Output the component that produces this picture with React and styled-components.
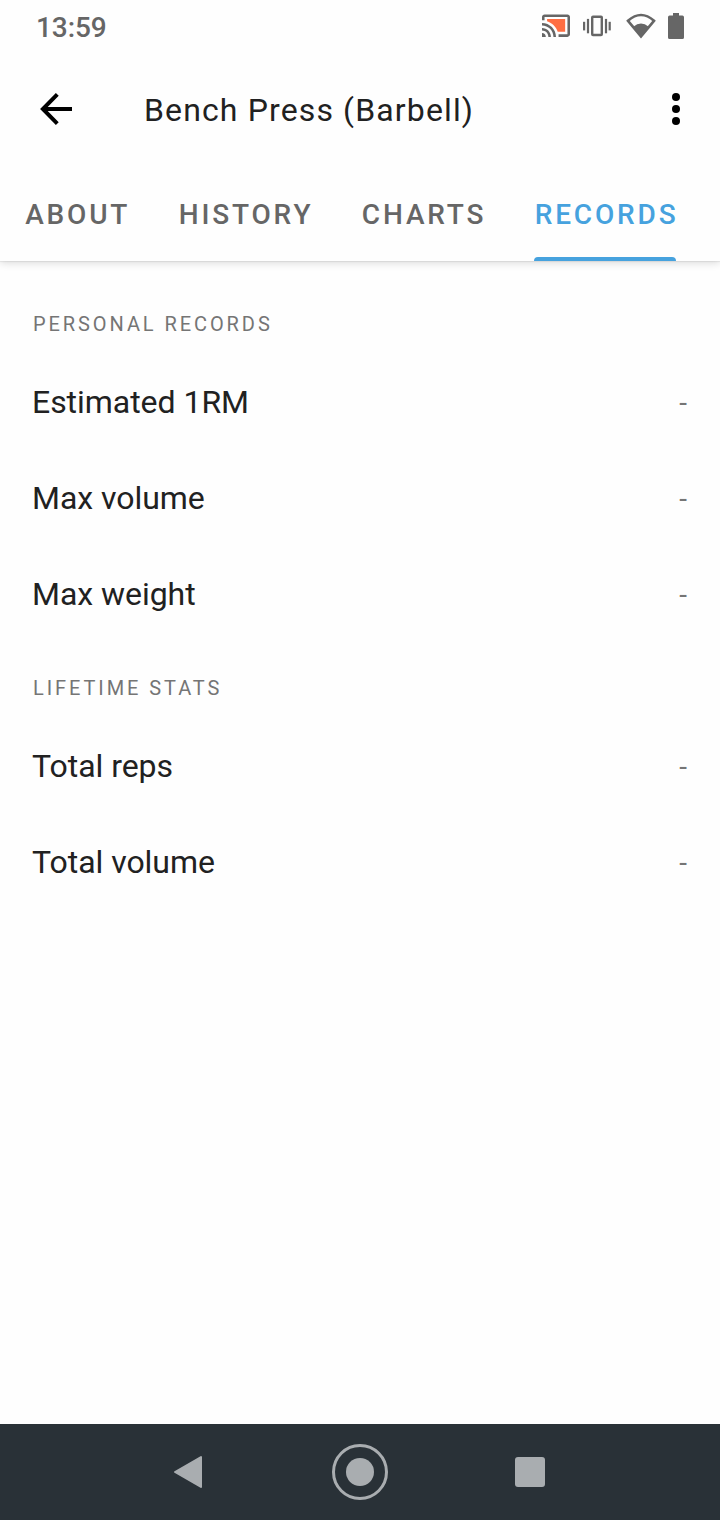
import React from 'react';
import styled, { createGlobalStyle } from 'styled-components';

const GlobalStyle = createGlobalStyle`
    * {
        box-sizing: border-box;
    }
    body {
        margin: 0;
        background: #fff;
        font-family: Roboto, sans-serif;
    }
    svg {
        display: block;
    }
    button {
        background: transparent;
        border: none;
        padding: 0;
        font-family: inherit;
    }
`

const Screen = styled.div`
    width: 720px;
    height: 1520px;
    display: flex;
    flex-direction: column;
    background: #fefefe;
    color: #212121;
    overflow: hidden;
`

const Header = styled.header`
    height: 261px;
    flex: none;
    background: #fefefe;
    box-shadow: 0 1px 1px rgba(0,0,0,.06), 0 2px 8px rgba(0,0,0,.14);
`

const StatusBar = styled.div`
    height: 54px;
    padding: 0 36px;
    display: flex;
    justify-content: space-between;
    color: #666;
    .time {
        font-size: 28px;
        font-weight: 500;
        line-height: 55px;
        letter-spacing: -.1px;
    }
`

const StatusIcons = styled.div`
    display: flex;
    align-items: center;
    height: 52px;
    svg:nth-child(2) { margin-left: 13px; }
    svg:nth-child(3) { margin-left: 15px; }
    svg:nth-child(4) { margin-left: 12px; }
`

const AppBar = styled.div`
    height: 110px;
    padding: 0 28px 0 40px;
    display: flex;
    align-items: center;
    h1 {
        flex: 1;
        margin: 0 0 0 72px;
        padding-top: 2px;
        font-size: 32px;
        font-weight: 400;
        line-height: 108px;
        letter-spacing: 1.13px;
    }
`

const Tabs = styled.nav`
    height: 97px;
    padding-left: 24px;
    display: flex;
    gap: 47.3px;
`

const Tab = styled.button`
    height: 97px;
    display: flex;
    flex-direction: column;
    justify-content: space-between;
    font-size: 28px;
    font-weight: 500;
    line-height: 101px;
    letter-spacing: 2.83px;
    text-indent: 1.2px;
    color: ${props => props.$active ? '#46a2de' : '#666'};
    white-space: nowrap;
    &::after {
        content: '';
        width: calc(100% - 2.8px);
        height: 4px;
        margin-top: -8px;
        border-radius: 4px 4px 0 0;
        background: ${props => props.$active ? '#46a2de' : 'transparent'};
    }
`

const Content = styled.main`
    flex: 1;
    padding: 49px 32px 0;
`

const Section = styled.section`
    margin-bottom: 32px;
    h2 {
        margin: 0 0 16px 1px;
        height: 28px;
        font-size: 20px;
        font-weight: 400;
        line-height: 28px;
        letter-spacing: 2.92px;
        color: #757575;
    }
`

const Row = styled.div`
    height: 96px;
    display: flex;
    justify-content: space-between;
    align-items: center;
    font-size: 32px;
    letter-spacing: -.04px;
    .value {
        font-size: 28px;
        letter-spacing: .9px;
        color: #757575;
    }
`

const NavBar = styled.footer`
    height: 96px;
    flex: none;
    display: flex;
    justify-content: center;
    align-items: center;
    gap: 110px;
    background: #293137;
`

const CastIcon = () => (
    <svg width="28" height="24" viewBox="1 3 22 18.86" fill="#666">
        <path d="M21 3.4H3c-1.1 0-2 .9-2 2v2.6h2V5.4h18v13.6h-7v2h7c1.1 0 2-.9 2-2V5.4c0-1.1-.9-2-2-2z" />
        <path d="M19.2 7H5v1.63c3.96 1.28 7.09 4.41 8.37 8.37h5.83z" fill="#ff6e42" />
        <path d="M1 18v3h3c0-1.66-1.34-3-3-3zM1 14v2c2.76 0 5 2.24 5 5h2c0-3.87-3.13-7-7-7zM1 10v2c4.97 0 9 4.03 9 9h2c0-6.08-4.93-11-11-11z" />
    </svg>
)

const VibrateIcon = () => (
    <svg width="28" height="22" viewBox="0 0 28 22" fill="#666">
        <rect x="9.2" y="1.8" width="9.6" height="18.2" rx=".8" fill="none" stroke="#666" strokeWidth="2.4" />
        <rect x="0" y="6.8" width="2.2" height="8.6" />
        <rect x="3.9" y="3.9" width="2.2" height="14.4" />
        <rect x="21.9" y="3.9" width="2.2" height="14.4" />
        <rect x="25.6" y="6.8" width="2.2" height="8.6" />
    </svg>
)

const WifiIcon = () => (
    <svg width="30" height="26" viewBox="0 0 30 26">
        <path d="M2 7.8Q15-3.8 28 7.8L15 23.4Z" fill="none" stroke="#666" strokeWidth="2.6" />
        <path d="M7.3 13.8Q15 7.4 22.7 13.8L15 24.4Z" fill="#666" />
    </svg>
)

const BatteryIcon = () => (
    <svg width="16" height="26" viewBox="0 0 16 26" fill="#666">
        <path d="M5 0H11V2.6H14.4Q16 2.6 16 4.2V24.4Q16 26 14.4 26H1.6Q0 26 0 24.4V4.2Q0 2.6 1.6 2.6H5Z" />
    </svg>
)

const BackIcon = () => (
    <svg width="32" height="32" viewBox="0 0 32 32" fill="none" stroke="#000" strokeWidth="4">
        <path d="M32 16H3.4M17.3 1.4L2.9 16L17.3 30.6" />
    </svg>
)

const MoreIcon = () => (
    <svg width="32" height="32" viewBox="0 0 32 32" fill="#000">
        <circle cx="16" cy="4" r="4" />
        <circle cx="16" cy="16" r="4" />
        <circle cx="16" cy="28" r="4" />
    </svg>
)

const sections = [
    { title: 'PERSONAL RECORDS', rows: ['Estimated 1RM', 'Max volume', 'Max weight'] },
    { title: 'LIFETIME STATS', rows: ['Total reps', 'Total volume'] },
]

const tabs = ['ABOUT', 'HISTORY', 'CHARTS', 'RECORDS']

export default function App() {
    return (
        <Screen>
            <GlobalStyle />
            <Header>
                <StatusBar>
                    <span className="time">13:59</span>
                    <StatusIcons>
                        <CastIcon />
                        <VibrateIcon />
                        <WifiIcon />
                        <BatteryIcon />
                    </StatusIcons>
                </StatusBar>
                <AppBar>
                    <button aria-label="Back"><BackIcon /></button>
                    <h1>Bench Press (Barbell)</h1>
                    <button aria-label="More"><MoreIcon /></button>
                </AppBar>
                <Tabs>
                    {tabs.map(tab => <Tab key={tab} $active={tab === 'RECORDS'}>{tab}</Tab>)}
                </Tabs>
            </Header>
            <Content>
                {sections.map(section => (
                    <Section key={section.title}>
                        <h2>{section.title}</h2>
                        {section.rows.map(row => (
                            <Row key={row}>
                                <span>{row}</span>
                                <span className="value">-</span>
                            </Row>
                        ))}
                    </Section>
                ))}
            </Content>
            <NavBar>
                <svg width="60" height="60" viewBox="0 0 60 60">
                    <path d="M15 30L41 15V45Z" fill="#a9adb0" stroke="#a9adb0" strokeWidth="2" strokeLinejoin="round" />
                </svg>
                <svg width="60" height="60" viewBox="0 0 60 60">
                    <circle cx="30" cy="30" r="26.5" fill="none" stroke="#a9adb0" strokeWidth="3" />
                    <circle cx="30" cy="30" r="14" fill="#a9adb0" />
                </svg>
                <svg width="60" height="60" viewBox="0 0 60 60">
                    <rect x="15" y="15" width="30" height="30" rx="3" fill="#a9adb0" />
                </svg>
            </NavBar>
        </Screen>
    )
}
